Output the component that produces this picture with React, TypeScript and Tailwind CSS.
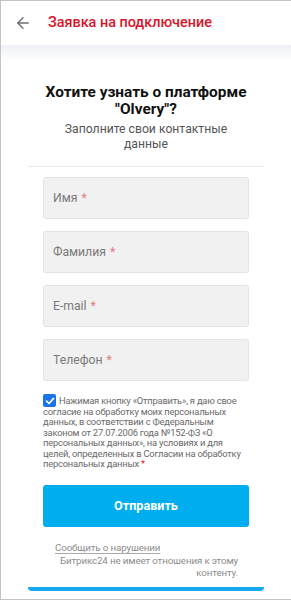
import { ArrowLeft } from 'lucide-react';

const fields = ['Имя', 'Фамилия', 'E-mail', 'Телефон'];

export default function App() {
  return (
    <div className="h-[600px] w-full overflow-hidden bg-white border-l border-t border-b border-[#c4c4c4] font-['Roboto',sans-serif] flex flex-col">
      {/* Шапка */}
      <div className="h-[44px] flex items-center shrink-0">
        <ArrowLeft size={18} strokeWidth={1.8} className="ml-[13px] text-[#6b6f75]" />
        <div className="ml-[16px] text-[14.4px] font-medium text-[#d9142b]">Заявка на подключение</div>
      </div>
      <div className="h-[16px] shrink-0 bg-gradient-to-b from-[#eef0f4] to-white" />

      <div className="mx-[27px] flex flex-col">
        <h1 className="mt-[23px] text-center text-[15.4px] leading-[17px] font-bold text-[#111]">
          Хотите узнать о платформе "Olvery"?
        </h1>
        <p className="mt-[4px] px-4 text-center text-[12.2px] leading-[15px] text-[#555]">
          Заполните свои контактные данные
        </p>
        <div className="mt-[14px] h-px bg-[#e8e8e8]" />

        <div className="px-[15px] pt-[10px] flex flex-col gap-[12px]">
          {fields.map((f) => (
            <div
              key={f}
              className="h-[42px] rounded-[3px] bg-[#f1f1f1] border border-[#e3e3e3] flex items-center pl-[9px] text-[12.2px] text-[#7a7a7a]"
            >
              {f}
              <span className="ml-[4px] text-[#e77a7a]">*</span>
            </div>
          ))}
        </div>

        <div className="pl-[15px] pr-[20px] mt-[13px] text-[9.4px] leading-[10.4px] tracking-[-0.22px] text-[#6a6a6a]">
          <span className="inline-flex align-[-2px] mr-[3px] w-[13px] h-[13px] rounded-[2px] bg-[#1a73e8] items-center justify-center">
            <svg width="10" height="10" viewBox="0 0 10 10" fill="none">
              <path d="M1.6 5.2 L4 7.5 L8.6 2.4" stroke="white" strokeWidth="1.7" strokeLinecap="round" strokeLinejoin="round" />
            </svg>
          </span>
          Нажимая кнопку «Отправить», я даю свое согласие на обработку моих персональных данных, в соответствии с Федеральным законом от 27.07.2006 года №152-ФЗ «О персональных данных», на условиях и для целей, определенных в Согласии на обработку персональных данных <span className="text-[#e0231f]">*</span>
        </div>

        <div className="px-[15px] mt-[16px]">
          <button className="w-full h-[42px] rounded-[3px] bg-[#00aeef] text-white text-[12.6px] font-bold">
            Отправить
          </button>
        </div>

        <div className="mt-[15px] ml-[27px] mr-[26px] text-[9.8px] leading-[12.5px] tracking-[-0.15px] text-[#8c8c8c]">
          <div className="underline underline-offset-[2px] decoration-[#aaa]">Сообщить о нарушении</div>
          <div className="text-right">Битрикс24 не имеет отношения к этому контенту.</div>
        </div>

        <div className="mt-[7px] h-[4px] rounded-b-[6px] bg-[#13aaf0]" />
      </div>
    </div>
  );
}
